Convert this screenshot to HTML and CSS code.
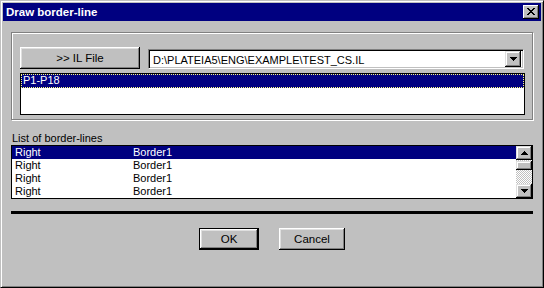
FILE: index.html
```html
<!DOCTYPE html>
<html>
<head>
<meta name="viewport" content="width=device-width, initial-scale=1">
<link rel="stylesheet" href="styles.css">
</head>
<body>

<div class="window">
    <div class="titlebar">
        <span class="title">Draw border-line</span>
        <span class="closeBtn">
            <svg width="8" height="7" viewBox="0 0 8 7" shape-rendering="crispEdges"><path d="M0 0h2v1H0zM6 0h2v1H6zM1 1h2v1H1zM5 1h2v1H5zM2 2h4v1H2zM3 3h2v1H3zM2 4h4v1H2zM1 5h2v1H1zM5 5h2v1H5zM0 6h2v1H0zM6 6h2v1H6z" fill="#000"/></svg>
        </span>
    </div>

    <div class="content">
        <div class="groupbox">
            <div class="fileRow">
                <span class="btn fileBtn">&gt;&gt; IL File</span>
                <div class="combo">
                    <span class="comboText">D:\PLATEIA5\ENG\EXAMPLE\TEST_CS.IL</span>
                    <span class="arrowBtn">
                        <svg width="7" height="4" viewBox="0 0 7 4" shape-rendering="crispEdges"><path d="M0 0h7v1H0zM1 1h5v1H1zM2 2h3v1H2zM3 3h1v1H3z" fill="#000"/></svg>
                    </span>
                </div>
            </div>
            <ul class="listbox sheetList">
                <li class="selected focused">P1-P18</li>
            </ul>
        </div>

        <div class="listLabel">List of border-lines</div>
        <div class="listbox borderList">
            <ul class="rows">
                <li class="selected"><span class="col1">Right</span><span>Border1</span></li>
                <li><span class="col1">Right</span><span>Border1</span></li>
                <li><span class="col1">Right</span><span>Border1</span></li>
                <li><span class="col1">Right</span><span>Border1</span></li>
            </ul>
            <div class="scrollbar">
                <span class="scrollBtn">
                    <svg width="7" height="4" viewBox="0 0 7 4" shape-rendering="crispEdges"><path d="M3 0h1v1H3zM2 1h3v1H2zM1 2h5v1H1zM0 3h7v1H0z" fill="#000"/></svg>
                </span>
                <span class="track small"></span>
                <span class="thumb"></span>
                <span class="track"></span>
                <span class="scrollBtn">
                    <svg width="7" height="4" viewBox="0 0 7 4" shape-rendering="crispEdges"><path d="M0 0h7v1H0zM1 1h5v1H1zM2 2h3v1H2zM3 3h1v1H3z" fill="#000"/></svg>
                </span>
            </div>
        </div>

        <div class="separator"></div>

        <div class="buttons">
            <span class="defaultFrame"><span class="btn okBtn">OK</span></span>
            <span class="btn cancelBtn">Cancel</span>
        </div>
    </div>
</div>

</body>
</html>
```

FILE: styles.css
```css
/* Page */
* {
    box-sizing: border-box;
}

body {
    margin: 0;
    font-family: "Liberation Sans", Arial, sans-serif;
    font-size: 11px;
    color: #000;
}

/* The dialog window with its 3D frame */
.window {
    width: 544px;
    height: 288px;
    background: #c0c0c0;
    border: 1px solid;
    border-color: #c0c0c0 #000 #000 #c0c0c0;
    box-shadow: inset 1px 1px #fff, inset -1px -1px #808080;
    padding: 2px;
    display: flex;
    flex-direction: column;
}

/* Title bar */
.titlebar {
    height: 18px;
    background: #000080;
    color: #fff;
    display: flex;
    align-items: center;
    justify-content: space-between;
    padding: 0 2px 0 3px;
}

.title {
    font-weight: bold;
    font-size: 11.5px;
}

.closeBtn {
    width: 16px;
    height: 14px;
    background: #c0c0c0;
    box-shadow: inset -1px -1px #000, inset 1px 1px #fff, inset -2px -2px #808080;
    display: flex;
    align-items: center;
    justify-content: center;
    padding: 0 1px 1px 0;
}

.content {
    flex: 1;
    padding: 11px 8px 0 8px;
    display: flex;
    flex-direction: column;
}

/* Etched group box */
.groupbox {
    border: 1px solid #808080;
    box-shadow: inset 1px 1px #fff, 1px 1px #fff;
    height: 88px;
    padding: 14px 7px 0 8px;
    display: flex;
    flex-direction: column;
}

.fileRow {
    display: flex;
    align-items: flex-end;
    gap: 8px;
}

/* Raised push button */
.btn {
    display: flex;
    align-items: center;
    justify-content: center;
    background: #c0c0c0;
    box-shadow: inset -1px -1px #000, inset 1px 1px #fff, inset -2px -2px #808080, inset 2px 2px #dfdfdf;
}

.fileBtn {
    width: 120px;
    height: 22px;
    padding-bottom: 1px;
    font-size: 11.5px;
}

/* Combo box */
.combo {
    flex: 1;
    height: 20px;
    margin-right: 1px;
    background: #fff;
    border: 1px solid;
    border-color: #808080 #fff #fff #808080;
    box-shadow: inset 1px 1px #000, inset -1px -1px #c0c0c0;
    display: flex;
    align-items: center;
    padding: 2px 2px 2px 4px;
}

.comboText {
    flex: 1;
    padding-top: 1px;
}

.arrowBtn {
    width: 16px;
    height: 16px;
    background: #c0c0c0;
    box-shadow: inset -1px -1px #000, inset 1px 1px #dfdfdf, inset -2px -2px #808080, inset 2px 2px #fff;
    display: flex;
    align-items: center;
    justify-content: center;
}

/* List boxes */
.listbox {
    margin: 0;
    padding: 0;
    list-style-type: none;
    background: #fff;
    border: 1px solid #000;
}

.listbox li {
    height: 13px;
    line-height: 13px;
}

.selected {
    background: #000080;
    color: #fff;
}

.focused {
    outline: 1px dotted #ffff80;
    outline-offset: -1px;
}

.sheetList {
    margin-top: 4px;
    height: 42px;
}

.sheetList li {
    height: 14px;
    padding-left: 2px;
}

.listLabel {
    margin-top: 12px;
    height: 13px;
    line-height: 13px;
    padding-left: 1px;
}

.borderList {
    height: 54px;
    display: flex;
}

.rows {
    flex: 1;
    margin: 0;
    padding: 0;
    list-style-type: none;
}

.rows li {
    display: flex;
    padding-left: 3px;
}

.col1 {
    width: 118px;
}

/* Vertical scroll bar */
.scrollbar {
    width: 16px;
    display: flex;
    flex-direction: column;
}

.scrollBtn {
    height: 14px;
    background: #c0c0c0;
    box-shadow: inset -1px -1px #000, inset 1px 1px #dfdfdf, inset -2px -2px #808080, inset 2px 2px #fff;
    display: flex;
    align-items: center;
    justify-content: center;
}

.thumb {
    height: 9px;
    background: #c0c0c0;
    box-shadow: inset -1px -1px #000, inset 1px 1px #dfdfdf, inset -2px -2px #808080, inset 2px 2px #fff;
}

.track {
    flex: 1;
    background: repeating-conic-gradient(#fff 0 25%, #c0c0c0 0 50%) 0 0 / 2px 2px;
}

.track.small {
    flex: 0 0 1px;
}

/* Horizontal divider */
.separator {
    margin-top: 12px;
    height: 3px;
    background: #000;
}

/* Dialog buttons */
.buttons {
    margin-top: 14px;
    display: flex;
    justify-content: center;
    gap: 20px;
}

.defaultFrame {
    border: 1px solid #000;
}

.okBtn {
    width: 58px;
    height: 20px;
    font-size: 11.5px;
}

.cancelBtn {
    width: 66px;
    height: 22px;
    font-size: 11.5px;
}
```
